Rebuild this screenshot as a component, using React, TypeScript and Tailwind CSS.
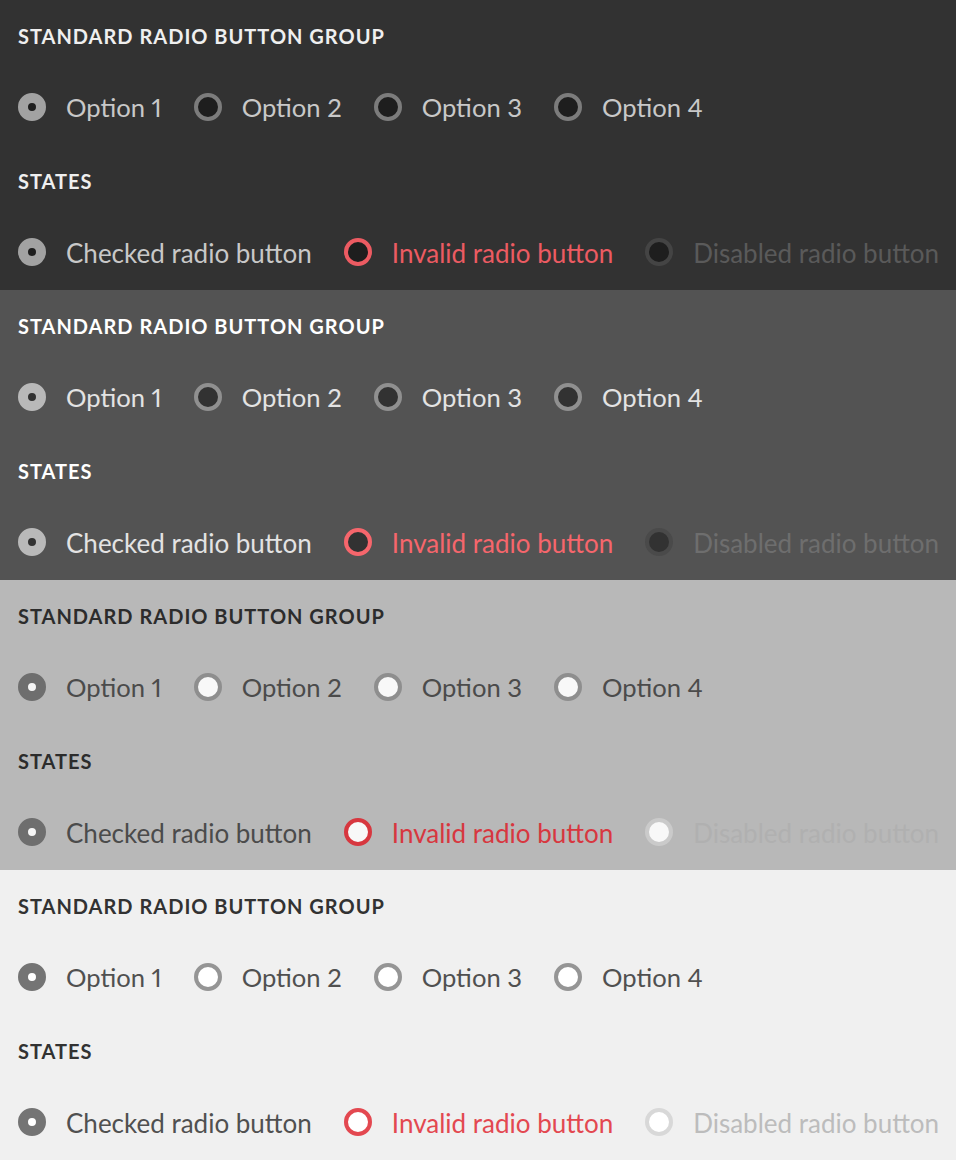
import React from "react";

type Theme = {
  bg: string;
  heading: string;
  label: string;
  checked: string;
  dot: string;
  ring: string;
  fill: string;
  invalid: string;
  invalidRing: string;
  disRing: string;
  disFill: string;
  disText: string;
};

const themes: Theme[] = [
  {
    bg: "bg-[#323232]",
    heading: "text-[#efefef]",
    label: "text-[#c8c8c8]",
    checked: "border-[#a2a2a2]",
    dot: "bg-[#1e1e1e]",
    ring: "border-[#7c7c7c]",
    fill: "bg-[#1e1e1e]",
    invalid: "text-[#ec5b62]",
    invalidRing: "border-[#ec5b62]",
    disRing: "border-[#444444]",
    disFill: "bg-[#1e1e1e]",
    disText: "text-[#5a5a5a]",
  },
  {
    bg: "bg-[#535353]",
    heading: "text-[#ffffff]",
    label: "text-[#e3e3e3]",
    checked: "border-[#b9b9b9]",
    dot: "bg-[#323232]",
    ring: "border-[#909090]",
    fill: "bg-[#323232]",
    invalid: "text-[#f6666c]",
    invalidRing: "border-[#f6666c]",
    disRing: "border-[#4a4a4a]",
    disFill: "bg-[#323232]",
    disText: "text-[#6e6e6e]",
  },
  {
    bg: "bg-[#b8b8b8]",
    heading: "text-[#2c2c2c]",
    label: "text-[#4b4b4b]",
    checked: "border-[#6e6e6e]",
    dot: "bg-[#f5f5f5]",
    ring: "border-[#8e8e8e]",
    fill: "bg-[#f8f8f8]",
    invalid: "text-[#d7373f]",
    invalidRing: "border-[#d7373f]",
    disRing: "border-[#cacaca]",
    disFill: "bg-[#f8f8f8]",
    disText: "text-[#b0b0b0]",
  },
  {
    bg: "bg-[#f0f0f0]",
    heading: "text-[#323232]",
    label: "text-[#505050]",
    checked: "border-[#747474]",
    dot: "bg-[#ffffff]",
    ring: "border-[#959595]",
    fill: "bg-[#ffffff]",
    invalid: "text-[#e34850]",
    invalidRing: "border-[#e34850]",
    disRing: "border-[#d8d8d8]",
    disFill: "bg-[#ffffff]",
    disText: "text-[#bcbcbc]",
  },
];

const font = { fontFamily: "Lato, 'Liberation Sans', sans-serif" };

function Radio({
  t,
  kind,
  label,
  size = "text-[25.6px]",
}: {
  t: Theme;
  kind: "checked" | "unchecked" | "invalid" | "disabled";
  label: string;
  size?: string;
}) {
  let circle = "";
  let text = t.label;
  if (kind === "checked") circle = `border-[10px] ${t.checked} ${t.dot}`;
  if (kind === "unchecked") circle = `border-4 ${t.ring} ${t.fill}`;
  if (kind === "invalid") {
    circle = `border-4 ${t.invalidRing} ${t.fill}`;
    text = t.invalid;
  }
  if (kind === "disabled") {
    circle = `border-4 ${t.disRing} ${t.disFill}`;
    text = t.disText;
  }
  return (
    <label className="flex items-center mr-[32px]">
      <span className={`w-[28px] h-[28px] rounded-full shrink-0 ${circle}`} />
      <span className={`ml-[20px] pt-[2px] leading-none whitespace-nowrap proportional-nums ${size} ${text}`}>
        {label}
      </span>
    </label>
  );
}

function Section({ t }: { t: Theme }) {
  return (
    <section className={`h-[290px] px-[18px] ${t.bg}`} style={font}>
      <div className={`h-[72px] flex items-center text-[20px] font-bold tracking-[0.05em] uppercase ${t.heading}`}>
        Standard radio button group
      </div>
      <div className="h-[70px] flex items-center">
        <Radio t={t} kind="checked" label="Option 1" />
        <Radio t={t} kind="unchecked" label="Option 2" />
        <Radio t={t} kind="unchecked" label="Option 3" />
        <Radio t={t} kind="unchecked" label="Option 4" />
      </div>
      <div className={`h-[78px] flex items-center text-[20px] font-bold tracking-[0.05em] uppercase ${t.heading}`}>
        States
      </div>
      <div className="h-[64px] flex items-center">
        <Radio t={t} kind="checked" label="Checked radio button" size="text-[26px]" />
        <Radio t={t} kind="invalid" label="Invalid radio button" size="text-[26px]" />
        <Radio t={t} kind="disabled" label="Disabled radio button" size="text-[26px]" />
      </div>
    </section>
  );
}

export default function App() {
  return (
    <div className="w-[956px]">
      {themes.map((t, i) => (
        <Section key={i} t={t} />
      ))}
    </div>
  );
}
